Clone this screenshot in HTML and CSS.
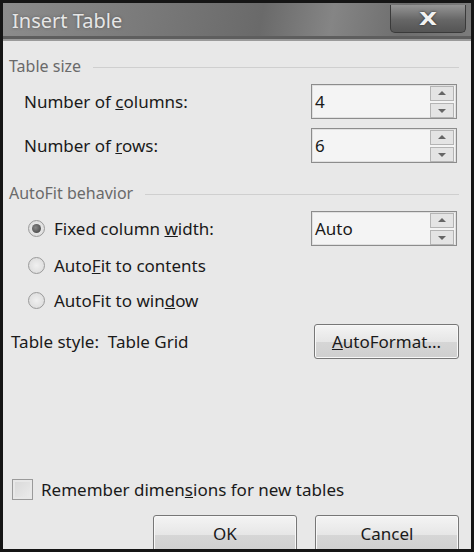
FILE: index.html
```html
<!DOCTYPE html>
<html lang="en">
<head>
  <meta charset="UTF-8">
  <title>Insert Table</title>
  <link rel="stylesheet" href="styles.css">
</head>
<body>
  <div class="dialog">
    <div class="titlebar">
      <span class="title">Insert Table</span>
      <button class="close-btn"><span>X</span></button>
    </div>

    <div class="content">
      <!-- Table size group -->
      <div class="group-head"><span>Table size</span><hr></div>
      <div class="field-row">
        <label class="indent">Number of <u>c</u>olumns:</label>
        <div class="spin"><span class="spin-value">4</span><div class="spin-btns"><i class="up"></i><i class="down"></i></div></div>
      </div>
      <div class="field-row">
        <label class="indent">Number of <u>r</u>ows:</label>
        <div class="spin"><span class="spin-value">6</span><div class="spin-btns"><i class="up"></i><i class="down"></i></div></div>
      </div>

      <!-- AutoFit group -->
      <div class="group-head autofit"><span>AutoFit behavior</span><hr></div>
      <div class="field-row">
        <label class="radio-label"><span class="radio checked"></span><span>Fixed column <u>w</u>idth:</span></label>
        <div class="spin"><span class="spin-value">Auto</span><div class="spin-btns"><i class="up"></i><i class="down"></i></div></div>
      </div>
      <label class="radio-label option"><span class="radio"></span><span>Auto<u>F</u>it to contents</span></label>
      <label class="radio-label option"><span class="radio"></span><span>AutoFit to win<u>d</u>ow</span></label>

      <div class="field-row style-row">
        <span>Table style:&nbsp; Table Grid</span>
        <button class="btn format-btn"><u>A</u>utoFormat...</button>
      </div>

      <div class="spacer"></div>

      <label class="check-label"><span class="checkbox"></span><span>Remember dimen<u>s</u>ions for new tables</span></label>
      <div class="actions">
        <button class="btn">OK</button>
        <button class="btn">Cancel</button>
      </div>
    </div>
  </div>
</body>
</html>
```

FILE: styles.css
```css
body {
  margin: 0;
  background: #e6e6e6;
  font-family: "Noto Sans", "Open Sans", sans-serif;
}

/* Window frame */
.dialog {
  width: 474px;
  height: 552px;
  box-sizing: border-box;
  border: 3px solid #151515;
  background: #e8e8e8;
  display: flex;
  flex-direction: column;
  overflow: hidden;
}

.titlebar {
  height: 36px;
  flex-shrink: 0;
  display: flex;
  align-items: flex-start;
  justify-content: space-between;
  background: linear-gradient(100deg, #8c8c8c 0%, #7a7a7a 30%, #6a6a6a 55%, #858585 70%, #6e6e6e 85%, #7c7c7c 100%);
  border-bottom: 2px solid #9a9a9a;
  box-shadow: inset 0 -3px 0 #5e5e5e;
}

.title {
  color: #e6e6e6;
  font-size: 20px;
  padding: 4px 0 0 9px;
  text-shadow: 0 0 3px #555;
}

.close-btn {
  width: 76px;
  height: 28px;
  margin: 2px 5px 0 0;
  border: 1px solid #3a3a3a;
  border-top: none;
  border-radius: 0 0 5px 5px;
  background: linear-gradient(#959595, #666 55%, #555);
  color: #f2f2f2;
  font-family: "DejaVu Sans", sans-serif;
  font-weight: bold;
  font-size: 18px;
  line-height: 22px;
  padding: 0;
  text-shadow: 0 0 2px #222;
}

/* the close glyph is drawn a little wider than the font's X */
.close-btn span {
  display: inline-block;
  transform: scaleX(1.3);
}

.content {
  flex: 1;
  display: flex;
  flex-direction: column;
  padding: 13px 12px 0 6px;
  font-size: 17px;
  color: #1a1a1a;
}

/* Group captions with a rule after them */
.group-head {
  display: flex;
  align-items: center;
  gap: 12px;
  color: #6a6a6a;
  font-size: 16px;
  height: 24px;
}

.group-head hr {
  flex: 1;
  border: none;
  border-top: 1px solid #cfcfcf;
  margin: 2px 0 0 0;
}

.group-head.autofit {
  margin-top: 18px;
}

.field-row {
  display: flex;
  align-items: center;
  justify-content: space-between;
  margin-top: 6px;
}

.field-row + .field-row {
  margin-top: 9px;
}

.indent {
  padding-left: 15px;
}

/* Spin box */
.spin {
  width: 144px;
  height: 33px;
  border: 1px solid #8c8c8c;
  box-shadow: inset 0 0 0 1px #e0e0e0;
  background: #f4f4f4;
  display: flex;
  align-items: center;
  justify-content: space-between;
  margin-right: 2px;
}

.spin-value {
  padding-left: 3px;
  font-size: 17px;
}

.spin-btns {
  display: flex;
  flex-direction: column;
  gap: 2px;
  margin-right: 2px;
}

.spin-btns i {
  width: 22px;
  height: 13px;
  border: 1px solid #b4b4b4;
  background: #e4e4e4;
  position: relative;
}

.spin-btns i::after {
  content: "";
  position: absolute;
  left: 7px;
  border-left: 4px solid transparent;
  border-right: 4px solid transparent;
}

.spin-btns .up::after {
  top: 4px;
  border-bottom: 4px solid #666;
}

.spin-btns .down::after {
  top: 5px;
  border-top: 4px solid #666;
}

/* Radio options */
.radio-label {
  display: flex;
  align-items: center;
  gap: 9px;
  padding-left: 19px;
}

.option {
  margin-top: 8px;
}

.option + .option {
  margin-top: 12px;
}

.radio {
  width: 17px;
  height: 17px;
  border-radius: 50%;
  border: 1px solid #9a9a9a;
  background: radial-gradient(circle, #f0f0f0 0%, #d8d8d8 100%);
  box-sizing: border-box;
  position: relative;
}

.radio.checked::after {
  content: "";
  position: absolute;
  left: 3px;
  top: 3px;
  width: 9px;
  height: 9px;
  border-radius: 50%;
  background: radial-gradient(circle at 40% 40%, #888, #3a3a3a);
}

.style-row {
  margin-top: 12px;
}

.style-row span {
  padding-left: 2px;
}

.btn {
  font-family: inherit;
  font-size: 17px;
  color: #1a1a1a;
  border: 1px solid #777;
  border-radius: 3px;
  background: linear-gradient(#f4f4f4, #e6e6e6 50%, #d6d6d6 51%, #cfcfcf);
  box-shadow: inset 0 0 0 1px #f8f8f8;
  padding: 0;
}

.format-btn {
  width: 145px;
  height: 35px;
}

.spacer {
  flex: 1;
}

.check-label {
  display: flex;
  align-items: center;
  gap: 8px;
  padding-left: 3px;
}

.checkbox {
  width: 21px;
  height: 21px;
  box-sizing: border-box;
  border: 1px solid #9a9a9a;
  background: linear-gradient(135deg, #d8d8d8, #ececec);
  box-shadow: inset 0 0 0 2px #e8e8e8;
}

.actions {
  display: flex;
  justify-content: flex-end;
  gap: 18px;
  margin-top: 14px;
  margin-bottom: -6px;
}

.actions .btn {
  width: 144px;
  height: 40px;
  padding-bottom: 4px;
}
```
